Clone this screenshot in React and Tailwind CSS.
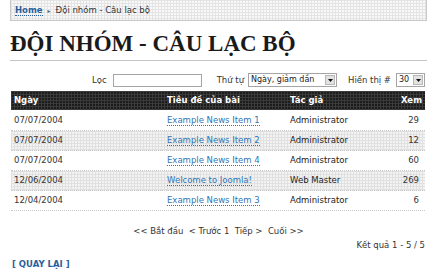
const ROWS = [
  { date: "07/07/2004", title: "Example News Item 1", author: "Administrator", hits: 29 },
  { date: "07/07/2004", title: "Example News Item 2", author: "Administrator", hits: 12 },
  { date: "07/07/2004", title: "Example News Item 4", author: "Administrator", hits: 60 },
  { date: "12/06/2004", title: "Welcome to Joomla!", author: "Web Master", hits: 269 },
  { date: "12/04/2004", title: "Example News Item 3", author: "Administrator", hits: 6 },
];

function Select({ value, width }) {
  return (
    <div className={`flex items-center h-[14px] border border-[#a5a5a5] bg-white ${width}`}>
      <span className="flex-1 pl-[2px] text-[8px] leading-none text-[#222]">{value}</span>
      <span className="flex items-center justify-center w-[10px] h-[10px] mr-px bg-[#e2e2e2] border border-[#b8b8b8]">
        <svg width="5" height="3" viewBox="0 0 5 3">
          <path d="M0 0h5L2.5 3z" fill="#111" />
        </svg>
      </span>
    </div>
  );
}

export default function App() {
  return (
    <div className="w-[436px] h-[280px] bg-white overflow-hidden font-['DejaVu_Sans',sans-serif] text-[#333]">
      <div className="ml-[10px] w-[417px]">
        {/* breadcrumb */}
        <div className="h-[21px] flex items-center pl-[4px] border-l border-r border-b border-[#c8c8c8] bg-[#f8f8f8] bg-[image:linear-gradient(#e4e4e4_1px,transparent_1px),linear-gradient(90deg,#e4e4e4_1px,transparent_1px)] bg-size-[3px_3px] text-[8.5px]">
          <span className="font-bold text-[#2b5f9c] border-b border-dotted border-[#2b5f9c] leading-[10px]">Home</span>
          <span className="mx-[5px] text-[6px] text-[#666]">▸</span>
          <span className="text-[#333]">Đội nhóm - Câu lạc bộ</span>
        </div>

        {/* heading */}
        <h1 className="mt-[11px] pb-[5px] border-b border-[#c4c4c4] font-['Liberation_Serif',serif] font-bold text-[23px] leading-[23px] text-[#1a1a1a]">
          ĐỘI NHÓM - CÂU LẠC BỘ
        </h1>

        {/* filter row */}
        <div className="mt-[12px] h-[14px] flex items-center justify-end pr-[2px] text-[8.5px]">
          <span>Lọc</span>
          <div className="ml-[6px] w-[89px] h-[13px] border border-[#a5a5a5] bg-white" />
          <span className="ml-[15px]">Thứ tự</span>
          <div className="ml-[4px]">
            <Select value="Ngày, giảm dần" width="w-[89px]" />
          </div>
          <span className="ml-[11px]">Hiển thị #</span>
          <div className="ml-[5px]">
            <Select value="30" width="w-[29px]" />
          </div>
        </div>

        {/* table */}
        <div className="mt-[4px] ml-px w-[414px]">
          <div className="grid grid-cols-[153px_123px_90px_1fr] items-center h-[19px] bg-[#1c1c1c] bg-[image:linear-gradient(#3a3a3a_1px,transparent_1px),linear-gradient(90deg,#3a3a3a_1px,transparent_1px)] bg-size-[3px_3px] text-white font-bold text-[8.5px]">
            <span className="pl-[3px]">Ngày</span>
            <span className="pl-[3px]">Tiêu đề của bài</span>
            <span className="pl-[3px]">Tác giả</span>
            <span className="text-right pr-[3px]">Xem</span>
          </div>
          <div className="mt-px">
            {ROWS.map((r, i) => (
              <div
                key={i}
                className={
                  i % 2 === 1
                    ? "grid grid-cols-[153px_123px_90px_1fr] items-center h-[20px] border-b border-dotted border-[#c8c8c8] bg-[#f3f3f3] bg-[image:linear-gradient(#e0e0e0_1px,transparent_1px),linear-gradient(90deg,#e0e0e0_1px,transparent_1px)] bg-size-[3px_3px] text-[8.5px]"
                    : "grid grid-cols-[153px_123px_90px_1fr] items-center h-[20px] border-b border-dotted border-[#c8c8c8] bg-white text-[8.5px]"
                }
              >
                <span className="pl-[3px]">{r.date}</span>
                <span className="pl-[3px]">
                  <span className="text-[#2f76b8] border-b border-dotted border-[#2f76b8] leading-[10px]">{r.title}</span>
                </span>
                <span className="pl-[3px] text-[#222]">{r.author}</span>
                <span className="text-right pr-[6px]">{r.hits}</span>
              </div>
            ))}
          </div>
        </div>

        {/* pagination */}
        <div className="mt-[14px] text-center text-[8.5px] leading-[12px] whitespace-pre">
          {"<< Bắt đầu  < Trước 1  Tiếp >  Cuối >>"}
        </div>
        <div className="mt-[2px] pr-[2px] text-right text-[8.5px] leading-[12px]">Kết quả 1 - 5 / 5</div>

        <div className="mt-[7px] pl-[2px] text-[8.5px] leading-[12px] font-bold text-[#2b5f9c]">[ QUAY LẠI ]</div>
      </div>
    </div>
  );
}
